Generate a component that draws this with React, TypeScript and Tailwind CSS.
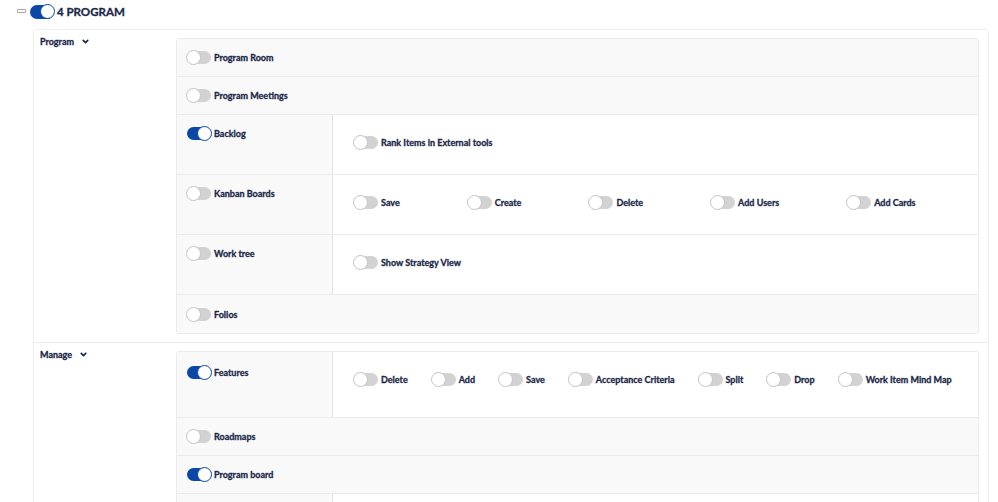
import { ChevronDown } from "lucide-react"

type Item = { label: string; on?: boolean }
type Row = {
  label: string
  on?: boolean
  items?: Item[]
  gap?: string
  h?: string
  lpt?: string
  blank?: boolean
}

function Toggle({ on = false, big = false }: { on?: boolean; big?: boolean }) {
  return (
    <span
      className={`relative inline-block shrink-0 rounded-full w-[24px] ${big ? "h-[14px]" : "h-[13px]"} ${
        on ? "bg-[#0b47a6]" : "bg-[#d2d2d2]"
      }`}
    >
      <span
        className={`absolute top-[-1px] size-[15px] rounded-full bg-white border ${
          on ? "right-[-1px] border-[#0b47a6]" : "left-[-1px] border-[#c4c4c4]"
        } ${big ? "top-[-0.5px]" : ""}`}
      />
    </span>
  )
}

function Option({ label, on }: Item) {
  return (
    <div className="flex items-center gap-[3px]">
      <Toggle on={on} />
      <span className="text-[9px] font-bold leading-none whitespace-nowrap [-webkit-text-stroke:0.3px_#1b2748]">
        {label}
      </span>
    </div>
  )
}

function TableRow({ row }: { row: Row }) {
  if (!row.items) {
    return (
      <div className="h-[38px] flex items-center pl-[10px] bg-[#f9f9f9]">
        <Option label={row.label} on={row.on} />
      </div>
    )
  }
  return (
    <div className={`flex ${row.h ?? "h-[60px]"}`}>
      <div className={`w-[156px] shrink-0 bg-[#f9f9f9] pl-[10px] border-r border-[#e2e2e2] ${row.lpt ?? "pt-[12px]"}`}>
        {!row.blank && <Option label={row.label} on={row.on} />}
      </div>
      <div className={`flex-1 bg-white pl-[21px] pt-[21px] flex items-start ${row.gap ?? ""}`}>
        {!row.blank && row.items.map((it) => <Option key={it.label} {...it} />)}
      </div>
    </div>
  )
}

function Section({ title, rows, last }: { title: string; rows: Row[]; last?: boolean }) {
  return (
    <div className={`flex pt-[8px] pb-[8px] pr-[9px] ${last ? "" : "border-b border-[#ececec]"}`}>
      <div className="w-[142px] shrink-0 pl-[6px] -mt-[2px] flex items-start gap-[7px]">
        <span className="text-[9px] font-bold leading-[12px] [-webkit-text-stroke:0.3px_#1b2748]">{title}</span>
        <ChevronDown size={9} strokeWidth={4.5} className="mt-[1px]" />
      </div>
      <div className="flex-1 border border-[#ebebeb] rounded-[3px] overflow-hidden divide-y divide-[#ebebeb]">
        {rows.map((r) => (
          <TableRow key={r.label} row={r} />
        ))}
      </div>
    </div>
  )
}

const program: Row[] = [
  { label: "Program Room" },
  { label: "Program Meetings" },
  { label: "Backlog", on: true, items: [{ label: "Rank Items in External tools" }] },
  {
    label: "Kanban Boards",
    gap: "gap-[68px]",
    items: [
      { label: "Save" },
      { label: "Create" },
      { label: "Delete" },
      { label: "Add Users" },
      { label: "Add Cards" },
    ],
  },
  { label: "Work tree", items: [{ label: "Show Strategy View" }] },
  { label: "Folios" },
]

const manage: Row[] = [
  {
    label: "Features",
    on: true,
    h: "h-[66px]",
    lpt: "pt-[14px]",
    gap: "gap-[24px]",
    items: [
      { label: "Delete" },
      { label: "Add" },
      { label: "Save" },
      { label: "Acceptance Criteria" },
      { label: "Split" },
      { label: "Drop" },
      { label: "Work Item Mind Map" },
    ],
  },
  { label: "Roadmaps" },
  { label: "Program board", on: true },
  { label: "more", blank: true, items: [] },
]

export default function App() {
  return (
    <div className="w-[998px] h-[502px] overflow-hidden bg-white text-[#1b2748] font-['Lato','Open_Sans',sans-serif]">
      <div className="h-[25px] flex items-center pl-[17px] pb-[1px]">
        <span className="w-[9px] h-[4px] border border-[#a9a9a9] bg-white rounded-[1px] mr-[4px] mb-[3px]" />
        <Toggle on big />
        <span className="ml-[3px] text-[11.5px] font-bold leading-none [-webkit-text-stroke:0.3px_#1b2748]">
          4 PROGRAM
        </span>
      </div>
      <div className="ml-[33px] w-[956px] mt-[4px] border border-[#eeeeee] rounded-[3px]">
        <Section title="Program" rows={program} />
        <Section title="Manage" rows={manage} last />
      </div>
    </div>
  )
}
